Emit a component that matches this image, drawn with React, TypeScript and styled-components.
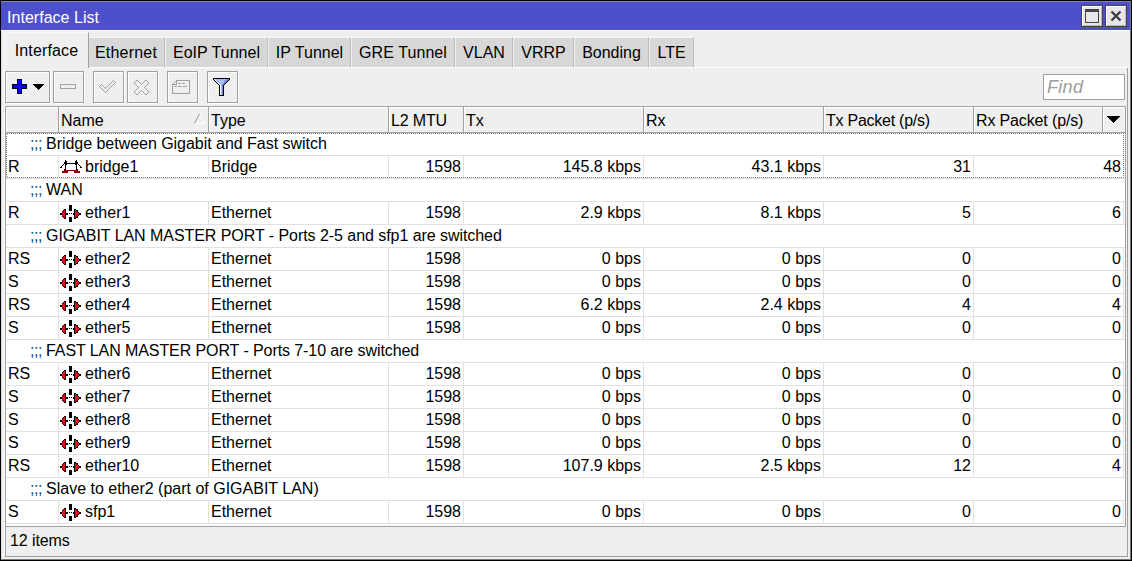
import React from 'react';
import styled, { createGlobalStyle } from 'styled-components';

const Global = createGlobalStyle`
  * { box-sizing: border-box; }
  html, body { margin: 0; padding: 0; overflow: hidden; background: #000; }
  body { font: 16px/22px "Liberation Sans", Arial, sans-serif; color: #000; }
`;

const Frame = styled.div`
  width: 1132px;
  height: 561px;
  border: 1px solid #000;
  background: #efefef;
  display: flex;
  flex-direction: column;
  box-shadow: inset 0 1px #8384a6, inset -1px -1px #77777d, inset 1px 0 #dcdcdc;
`;

const TitleBar = styled.div`
  margin: 1px 1px 0 0;
  height: 28px;
  flex: none;
  background: #4e4fcb;
  color: #fff;
  display: flex;
  align-items: center;
  justify-content: space-between;
  padding: 2px 3px 0 6px;
`;

const TitleText = styled.span`
  padding-top: 1px;
  letter-spacing: 0.03px;
`;

const WindowButtons = styled.div`
  display: flex;
  gap: 2px;
  margin-top: -2px;
`;

const WindowButton = styled.div`
  width: 22px;
  height: 22px;
  border: 1px solid #44444c;
  background: #e9e6ea;
  box-shadow: inset 1px 1px #fff, inset -1px -1px #b9b7bd;
  svg { display: block; }
`;

const TabStrip = styled.div`
  display: flex;
  align-items: flex-end;
  flex: none;
  height: 38px;
  margin-right: 1px;
  padding-left: 4px;
  border-top: 1px solid #fff;
`;

const Tab = styled.div<{ $w: number; $active?: boolean }>`
  width: ${p => p.$w}px;
  height: ${p => (p.$active ? 36 : 31)}px;
  padding-top: ${p => (p.$active ? 7 : 4)}px;
  padding-right: ${p => (p.$active ? 1 : 0)}px;
  text-align: center;
  white-space: nowrap;
  background: ${p => (p.$active ? '#efefef' : '#d7d7d7')};
  border-top: 1px solid #f8f8f8;
  border-left: 1px solid ${p => (p.$active ? '#f8f8f8' : '#f0f0f0')};
  border-right: 1px solid ${p => (p.$active ? '#a0a0a0' : '#bcbcbc')};
  border-bottom: ${p => (p.$active ? 'none' : '1px solid #fff')};
  &:nth-child(2) { border-left: none; padding-right: 1px; }
`;

const TabLabel = styled.span<{ $ls: number }>`
  letter-spacing: ${p => p.$ls}px;
`;

const TabRule = styled.div`
  flex: 1;
  height: 1px;
  background: #fff;
`;

const Page = styled.div`
  flex: 1;
  margin: 0 3px 3px 3px;
  padding: 3px 1px 0 1px;
  border-left: 1px solid #fff;
  border-right: 1px solid #a0a0a0;
  border-bottom: 1px solid #a0a0a0;
  display: flex;
  flex-direction: column;
`;

const Toolbar = styled.div`
  display: flex;
  height: 35px;
  flex: none;
  padding-right: 1px;
  margin-left: -1px;
`;

const ToolButton = styled.div<{ $w?: number; $after?: number }>`
  width: ${p => p.$w ?? 31}px;
  height: 32px;
  margin-right: ${p => p.$after ?? 0}px;
  border: 1px solid #a0a0a0;
  box-shadow: inset 1px 1px #fff, 1px 1px #fff;
  svg { display: block; }
`;

const Find = styled.div`
  margin: 3px 0 0 auto;
  width: 82px;
  height: 26px;
  border: 1px solid #a0a0a0;
  background: #fff;
  color: #9c9c9c;
  font-style: italic;
  font-size: 18px;
  letter-spacing: 0.3px;
  line-height: 24px;
  padding-left: 3px;
`;

const Table = styled.div`
  margin-left: -1px;
  width: 1121px;
  height: 421px;
  flex: none;
  border: 1px solid #a0a0a0;
  background: #fff;
`;

const HeaderRow = styled.div`
  display: grid;
  grid-template-columns: 53px 150px 180px 75px 180px 180px 150px 129px 22px;
  height: 26px;
  border-bottom: 1px solid #a0a0a0;
  background: #efefef;
`;

const HeaderCell = styled.div<{ $ls?: number }>`
  border-right: 1px solid #a0a0a0;
  box-shadow: inset 1px 1px #fff;
  padding: 3px 0 0 2px;
  white-space: nowrap;
  letter-spacing: ${p => p.$ls ?? 0}px;
  display: flex;
  justify-content: space-between;
  &:last-child { border-right: none; }
`;

const Row = styled.div`
  display: grid;
  grid-template-columns: 53px 150px 180px 75px 180px 180px 150px 150px;
  height: 23px;
  border-bottom: 1px solid #e0e0e0;
`;

const Cell = styled.div<{ $right?: boolean }>`
  border-right: 1px solid #e0e0e0;
  padding: 0 2px;
  white-space: nowrap;
  display: flex;
  justify-content: ${p => (p.$right ? 'flex-end' : 'flex-start')};
  svg { flex: none; display: block; margin-left: -1px; }
`;

const Comment = styled.div<{ $ls: number }>`
  height: 23px;
  border-bottom: 1px solid #e0e0e0;
  padding-left: 24px;
  display: flex;
  white-space: pre;
  letter-spacing: ${p => p.$ls}px;
`;

const Marks = styled.span`
  width: 16px;
  color: #0a4a86;
  letter-spacing: -0.4px;
`;

const Focused = styled.div`
  position: relative;
  &::after {
    content: '';
    position: absolute;
    inset: 0 1px 1px 0;
    background: repeating-conic-gradient(#777 0 25%, #fff 0 50%) 0 0 / 2px 2px;
    clip-path: polygon(evenodd, 0 0, 100% 0, 100% 100%, 0 100%, 0 0, 1px 1px, calc(100% - 1px) 1px, calc(100% - 1px) calc(100% - 1px), 1px calc(100% - 1px), 1px 1px);
  }
`;

const Status = styled.div`
  border-left: 1px solid #a0a0a0;
  margin-left: -1px;
  padding: 3px 0 0 4px;
  letter-spacing: -0.1px;
  flex: 1;
`;

const palette: Record<string, string> = {
  k: '#000000', r: '#e0101c', d: '#8b0008', g: '#a0a0a0', w: '#ffffff', b: '#0808f0',
  l: '#a9bdf0', m: '#6f8ad0',
};

function Pixels({ map, w, h, x = 0, y = 0 }: { map: string[]; w: number; h: number; x?: number; y?: number }) {
  const rects: React.ReactElement[] = [];
  map.forEach((line, j) => {
    let i = 0;
    while (i < line.length) {
      let e = i + 1;
      while (e < line.length && line[e] === line[i]) e++;
      const fill = palette[line[i]];
      if (fill) rects.push(<rect key={`${i}-${j}`} x={x + i} y={y + j} width={e - i} height={1} fill={fill} />);
      i = e;
    }
  });
  return <svg width={w} height={h} shapeRendering="crispEdges">{rects}</svg>;
}

const ether = [
  '.........kkk',
  '.........kkk',
  '.........kkk',
  '.........kkk',
  '....kk...kkk..kk',
  '...krk...kkk..krkk',
  '..krrk........krrk',
  '..rrrk........krrrk',
  'kkrrrkkk.k.k.kkrrrrkk',
  'kkrrrkkk.....kkrrrrkk',
  '..rrrk........krrrk',
  '..krrk........krrk',
  '...krk...kkk..krkk',
  '....kk...kkk..kk',
  '.........kkk',
  '.........kkk',
  '.........kkk',
];

const bridge = [
  '.....k..........k',
  '.....kk........kk',
  '....kkk........kkk',
  '....kkkkkkkkkkkkkk',
  '...k.kk........kk.k',
  '..k..k..........k..k',
  '.k...k..........k...k',
  'kk...k..........k...kk',
  '.....k..........k',
  '....kk..........kk',
  '....dddddddddddddd',
  '..dddddd......dddddd',
  '..dddddd......dddddd',
];

const addMap = [
  '.....kkkkk',
  '.....kbbbk',
  '.....kbbbk',
  '.....kbbbk',
  '.....kbbbk',
  'kkkkkkbbbkkkkkk',
  'kbbbbbbbbbbbbbk',
  'kbbbbbbbbbbbbbk',
  'kbbbbbbbbbbbbbk',
  'kkkkkkbbbkkkkkk',
  '.....kbbbk',
  '.....kbbbk',
  '.....kbbbk',
  '.....kbbbk',
  '.....kkkkk',
].map(l => l + '.'.repeat(15 - l.length)).map((l, j) => l + '......' + (j >= 5 && j < 11
  ? '.'.repeat(j - 5) + 'k'.repeat(11 - 2 * (j - 5)) : ''));

const arrowMap = ['kkkkkkkkkkkkk', '.kkkkkkkkkkk', '..kkkkkkkkk', '...kkkkkkk', '....kkkkk', '.....kkk', '......k'];

const checkMap = [
  '..............g',
  '.............g.g',
  '............g...g',
  '...........g...g',
  '..g.......g...g',
  '.g.g.....g...g',
  'g...g...g...g',
  '.g...g.g...g',
  '..g...g...g',
  '...g.....g',
  '....g...g',
  '.....g.g',
  '......g',
];

const crossMap = [
  '..gg.......gg',
  '.g..g.....g..g',
  'g....g...g....g',
  'g.....g.g.....g',
  '.g.....g.....g',
  '..g.........g',
  '...g.......g',
  '....g.....g',
  '...g.......g',
  '..g.........g',
  '.g.....g.....g',
  'g.....g.g.....g',
  'g....g...g....g',
  '.g..g.....g..g',
  '..gg.......gg',
];

const noteMap = [
  '....gggggggggggggg',
  '...gg............g',
  '..g.g............g',
  '.g..g.ggg.ggg....g',
  'ggggg............g',
  'g................g',
  'g.ggg.gggg.gggg..g',
  'g................g',
  'g................g',
  'g................g',
  'g................g',
  'g................g',
  'g................g',
  'gggggggggggggggggg',
];

const funnelMap = [
  'kkkkkkkkkkkkkkkkk',
  'kwlllllllllllmmmk',
  '.kwlllllllllmmmk',
  '..kwlllllllmmmk',
  '...kwllllllmmk',
  '....kwllllmmk',
  '.....kwllmmk',
  '......kwlmk',
  '......kwlmk',
  '......kwlmk',
  '......kwlmk',
  '......kwlmk',
  '......kwlmk',
  '......kwlmk',
  '......kwlmk',
  '......kwlmk',
  '......kwlmk',
  '......kkkkk',
];

const minusMap = ['gggggggggggggggg', 'g..............g', 'g..............g', 'g..............g', 'gggggggggggggggg'];

const tabs: [string, number, number][] = [
  ['Interface', 84, 0.15], ['Ethernet', 76, 0.2], ['EoIP Tunnel', 103, 0], ['IP Tunnel', 83, 0],
  ['GRE Tunnel', 104, 0.08], ['VLAN', 58, 0], ['VRRP', 61, 0], ['Bonding', 75, 0], ['LTE', 45, 0],
];

type Item = { c: string; ls?: number } | { v: string[] };

const eth = (flag: string, name: string, tx = '0 bps', rx = '0 bps', tp = '0', rp = '0'): Item =>
  ({ v: [flag, name, 'Ethernet', '1598', tx, rx, tp, rp] });

const focused: Item[] = [
  { c: 'Bridge between Gigabit and Fast switch', ls: -0.03 },
  { v: ['R', 'bridge1', 'Bridge', '1598', '145.8 kbps', '43.1 kbps', '31', '48'] },
];

const items: Item[] = [
  { c: 'WAN' },
  eth('R', 'ether1', '2.9 kbps', '8.1 kbps', '5', '6'),
  { c: 'GIGABIT LAN MASTER PORT - Ports 2-5 and sfp1 are switched', ls: -0.053 },
  eth('RS', 'ether2'),
  eth('S', 'ether3'),
  eth('RS', 'ether4', '6.2 kbps', '2.4 kbps', '4', '4'),
  eth('S', 'ether5'),
  { c: 'FAST LAN MASTER PORT - Ports 7-10 are switched', ls: -0.085 },
  eth('RS', 'ether6'),
  eth('S', 'ether7'),
  eth('S', 'ether8'),
  eth('S', 'ether9'),
  eth('RS', 'ether10', '107.9 kbps', '2.5 kbps', '12', '4'),
  { c: 'Slave to ether2 (part of GIGABIT LAN)' },
  eth('S', 'sfp1'),
];

function Line({ item }: { item: Item }) {
  if ('c' in item) {
    return <Comment $ls={item.ls ?? 0}><Marks>;;;</Marks>{item.c}</Comment>;
  }
  return (
    <Row>
      {item.v.map((t, i) => (
        <Cell key={i} $right={i > 2}>
          {i === 1 && (item.v[2] === 'Bridge'
            ? <Pixels map={bridge} w={25} h={22} y={4} />
            : <Pixels map={ether} w={25} h={22} y={3} />)}
          {t}
        </Cell>
      ))}
    </Row>
  );
}

export default function App() {
  return (
    <>
      <Global />
      <Frame>
        <TitleBar>
          <TitleText>Interface List</TitleText>
          <WindowButtons>
            <WindowButton>
              <svg width="20" height="20" shapeRendering="crispEdges">
                <rect x="3.5" y="3.5" width="13" height="13" fill="none" stroke="#44444c" />
                <rect x="3" y="3" width="14" height="3" fill="#44444c" />
              </svg>
            </WindowButton>
            <WindowButton>
              <svg width="20" height="20">
                <path d="M5.5 5.5L14.5 14.5M14.5 5.5L5.5 14.5" stroke="#3c3c42" strokeWidth="2.4" />
              </svg>
            </WindowButton>
          </WindowButtons>
        </TitleBar>
        <TabStrip>
          {tabs.map(([t, w, ls], i) => (
            <Tab key={t} $w={w} $active={i === 0}><TabLabel $ls={ls}>{t}</TabLabel></Tab>
          ))}
          <TabRule />
        </TabStrip>
        <Page>
          <Toolbar>
            <ToolButton $w={45} $after={3}><Pixels map={addMap} w={43} h={30} x={6} y={7} /></ToolButton>
            <ToolButton $after={9}><Pixels map={minusMap} w={29} h={30} x={6} y={12} /></ToolButton>
            <ToolButton $after={3}><Pixels map={checkMap} w={29} h={30} x={5} y={8} /></ToolButton>
            <ToolButton $after={9}><Pixels map={crossMap} w={29} h={30} x={6} y={8} /></ToolButton>
            <ToolButton $after={9}><Pixels map={noteMap} w={29} h={30} x={4} y={8} /></ToolButton>
            <ToolButton><Pixels map={funnelMap} w={29} h={30} x={5} y={6} /></ToolButton>
            <Find>Find</Find>
          </Toolbar>
          <Table>
            <HeaderRow>
              <HeaderCell />
              <HeaderCell>
                Name
                <svg width="18" height="22">
                  <path d="M9.5 3.5L14.5 13.5H4.5" stroke="#fff" fill="none" />
                  <path d="M4.5 13.5L9.5 3.5" stroke="#999" fill="none" />
                </svg>
              </HeaderCell>
              <HeaderCell>Type</HeaderCell>
              <HeaderCell $ls={-0.15}>L2 MTU</HeaderCell>
              <HeaderCell>Tx</HeaderCell>
              <HeaderCell>Rx</HeaderCell>
              <HeaderCell $ls={-0.25}>Tx Packet (p/s)</HeaderCell>
              <HeaderCell $ls={-0.14}>Rx Packet (p/s)</HeaderCell>
              <HeaderCell><Pixels map={arrowMap} w={20} h={20} x={2} y={6} /></HeaderCell>
            </HeaderRow>
            <Focused>{focused.map((it, i) => <Line key={i} item={it} />)}</Focused>
            {items.map((it, i) => <Line key={i} item={it} />)}
          </Table>
          <Status>12 items</Status>
        </Page>
      </Frame>
    </>
  );
}
